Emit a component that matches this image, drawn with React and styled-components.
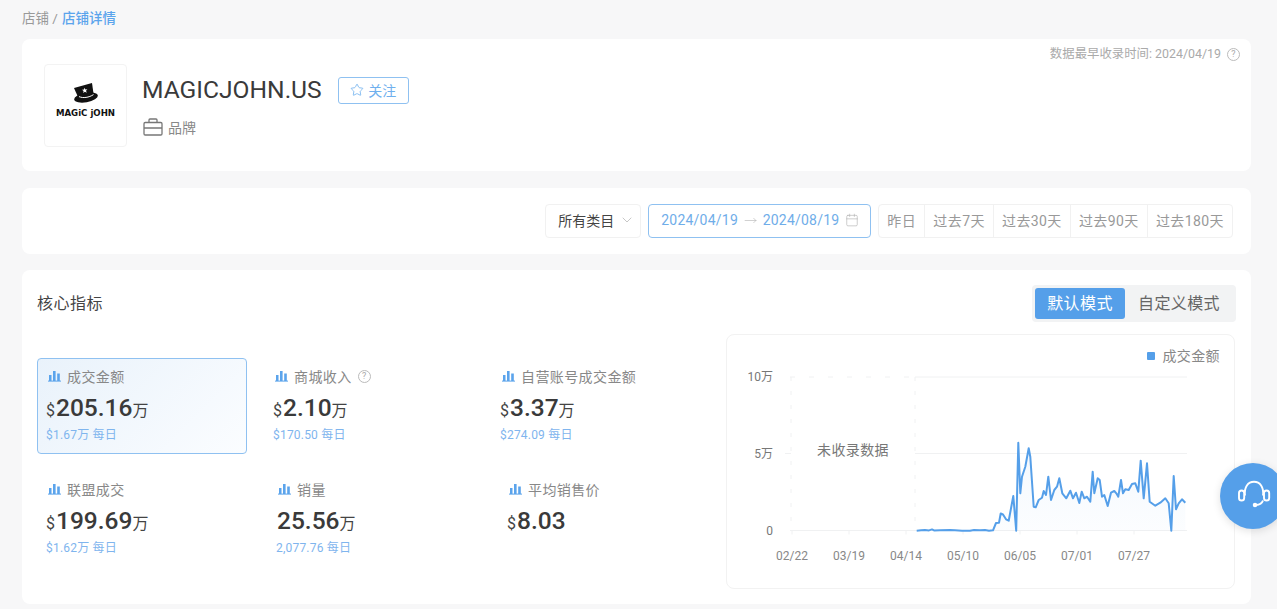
import React from "react";
import styled, { createGlobalStyle } from "styled-components";
import { ChevronDown, Star, Calendar, MoveRight } from "lucide-react";

const Global = createGlobalStyle`
  html, body { margin: 0; padding: 0; height: 609px; overflow: hidden; background: #f7f7f8; }
  body { font-family: Roboto, "Noto Sans CJK SC", sans-serif; color: #333; }
  * { box-sizing: border-box; }
`;

const Page = styled.div`
  padding: 0 26px 0 22px;
  display: flex;
  flex-direction: column;
`;
const Crumbs = styled.div`
  height: 39px;
  padding-bottom: 5px;
  display: flex;
  align-items: center;
  gap: 4px;
  font-size: 13.5px;
  color: #999;
`;
const CrumbNow = styled.span`
  color: #5ba4ec;
  font-weight: 500;
`;
const Card = styled.section`
  background: #fff;
  border-radius: 8px;
`;
const ShopCard = styled(Card)`
  height: 132px;
  padding: 8px 11px 0 22px;
  display: flex;
  align-items: flex-start;
  margin-bottom: 17px;
`;
const LogoBox = styled.div`
  width: 83px;
  height: 83px;
  margin-top: 17px;
  border: 1px solid #f3f3f3;
  border-radius: 4px;
  display: flex;
  flex-direction: column;
  align-items: center;
  justify-content: center;
  padding-bottom: 10px;
`;
const LogoWord = styled.span`
  font-family: "DejaVu Sans", sans-serif;
  font-weight: 700;
  font-size: 8.6px;
  line-height: 9px;
  color: #111;
  white-space: nowrap;
  margin-top: 5px;
`;
const ShopInfo = styled.div`
  margin: 28px 0 0 15px;
  display: flex;
  flex-direction: column;
  gap: 12px;
`;
const ShopTop = styled.div`
  display: flex;
  align-items: center;
  gap: 16px;
`;
const ShopName = styled.h1`
  margin: 0;
  font-weight: 400;
  font-size: 24.6px;
  line-height: 30px;
  color: #3a3a3a;
`;
const Follow = styled.button`
  width: 71px;
  height: 27px;
  padding: 0 0 1px;
  background: #fff;
  border: 1px solid #8fc1f1;
  border-radius: 3px;
  color: #6fb0ee;
  font: 14px Roboto, "Noto Sans CJK SC", sans-serif;
  display: flex;
  align-items: center;
  justify-content: center;
  gap: 4px;
`;
const TypeRow = styled.div`
  display: flex;
  align-items: center;
  gap: 5px;
  font-size: 14px;
  color: #888;
  margin-left: 1px;
`;
const Note = styled.div`
  margin-left: auto;
  display: flex;
  align-items: center;
  gap: 6px;
  font-size: 12.4px;
  line-height: 14px;
  color: #aaa;
`;
const HelpMark = styled.span`
  width: 13px;
  height: 13px;
  border: 1px solid #bbb;
  border-radius: 50%;
  color: #aaa;
  font-size: 9px;
  line-height: 11px;
  letter-spacing: 0;
  text-align: center;
  flex: none;
`;
const FilterCard = styled(Card)`
  height: 66px;
  margin-bottom: 16px;
  padding: 16px 18px 0 0;
  display: flex;
  justify-content: flex-end;
  gap: 7px;
`;
const Select = styled.div`
  width: 96px;
  height: 34px;
  padding: 0 5px 2px 12px;
  border: 1px solid #f1f1f1;
  border-radius: 4px;
  display: flex;
  align-items: center;
  justify-content: space-between;
  font-size: 14px;
  color: #444;
`;
const DateRange = styled.div`
  width: 223px;
  height: 34px;
  padding: 0 11px 2px 12px;
  border: 1px solid #8fc1f1;
  border-radius: 4px;
  display: flex;
  align-items: center;
  justify-content: space-between;
  font-size: 14px;
  letter-spacing: 0.22px;
  color: #6fade9;
`;
const Presets = styled.div`
  height: 34px;
  border: 1px solid #f1f1f1;
  border-radius: 4px;
  display: flex;
`;
const Preset = styled.div`
  padding: 0 8.1px 2px;
  display: flex;
  align-items: center;
  font-size: 14px;
  letter-spacing: 0.4px;
  color: #999;
  & + & { border-left: 1px solid #f1f1f1; }
`;
const CoreCard = styled(Card)`
  height: 334px;
  padding: 15px 16px 15px 15px;
  display: flex;
  flex-direction: column;
  gap: 12px;
`;
const CoreHead = styled.div`
  height: 37px;
  display: flex;
  align-items: center;
  justify-content: space-between;
`;
const CoreTitle = styled.h2`
  margin: 0;
  padding-bottom: 3px;
  font-size: 16px;
  font-weight: 400;
  letter-spacing: 0.5px;
  color: #444;
`;
const Modes = styled.div`
  margin-right: -1px;
  padding: 3px;
  border-radius: 4px;
  background: #f2f3f4;
  display: flex;
`;
const Mode = styled.div`
  height: 31px;
  padding: 0 ${p => (p.$active ? 12.2 : 13)}px 3px;
  border-radius: 3px;
  display: flex;
  align-items: center;
  font-size: 16px;
  letter-spacing: 0.4px;
  background: ${p => (p.$active ? "#559fe9" : "transparent")};
  color: ${p => (p.$active ? "#fff" : "#666")};
`;
const CoreBody = styled.div`
  display: flex;
  gap: 25px;
`;
const Metrics = styled.div`
  margin-top: 24px;
  display: grid;
  grid-template-columns: repeat(3, 210px);
  grid-auto-rows: 96px;
  gap: 17px;
  align-content: start;
`;
const Metric = styled.div`
  padding: 9px 0 0 ${p => p.$inset ?? 9}px;
  border: 1px solid ${p => (p.$active ? "#8fc1f1" : "transparent")};
  border-radius: 4px;
  background: ${p => (p.$active ? "linear-gradient(135deg, #e9f2fb, #fbfdff)" : "transparent")};
`;
const MetricLabel = styled.div`
  height: 16px;
  margin-left: 1px;
  display: flex;
  align-items: center;
  gap: 6px;
  font-size: 14px;
  letter-spacing: 0.4px;
  color: #888;
`;
const MetricValue = styled.div`
  margin: 9px 0 0 -1px;
  height: 30px;
  display: flex;
  align-items: baseline;
  font-size: 16px;
  color: #444;
`;
const Number = styled.strong`
  font-size: 24.5px;
  line-height: 30px;
  font-weight: 500;
  color: #3a3a3a;
  margin-left: 1px;
`;
const MetricDaily = styled.div`
  margin: 4px 0 0 -1px;
  font-size: 12px;
  line-height: 16px;
  letter-spacing: 0.2px;
  color: #7fb5ee;
`;
const ChartPanel = styled.div`
  position: relative;
  width: 509px;
  height: 255px;
  border: 1px solid #f2f2f2;
  border-radius: 8px;
`;
const Legend = styled.div`
  position: absolute;
  top: 12px;
  right: 14px;
  display: flex;
  align-items: center;
  gap: 7px;
  font-size: 14px;
  line-height: 18px;
  letter-spacing: 0.4px;
  color: #888;
`;
const LegendDot = styled.i`
  width: 8px;
  height: 8px;
  border-radius: 1px;
  background: #559fe9;
`;
const ChartSvg = styled.svg`
  display: block;
  font-family: Roboto, "Noto Sans CJK SC", sans-serif;
`;
const Support = styled.div`
  position: fixed;
  right: -9px;
  top: 463px;
  width: 66px;
  height: 66px;
  padding-left: 2px;
  border-radius: 50%;
  background: #559fe9;
  box-shadow: 0 2px 8px rgba(0, 0, 0, 0.12);
  display: flex;
  align-items: center;
  justify-content: center;
`;

const Bars = () => (
  <svg width="13" height="12" viewBox="0 0 13 12" fill="#5ba4ec">
    <rect x="1" y="5" width="2.5" height="6" />
    <rect x="5" y="1" width="2.6" height="10" />
    <rect x="9.2" y="3.5" width="2.6" height="7.5" />
    <rect x="0" y="10.6" width="13" height="1" />
  </svg>
);

const Hat = () => (
  <svg width="24" height="21" viewBox="0 0 24 21">
    <path d="M0 5 L18 0 L19.5 10.5 L4 14 Z" fill="#111" />
    <ellipse cx="12" cy="14.5" rx="12" ry="4.8" transform="rotate(-10 12 14.5)" fill="#111" />
    <path d="M5 13.6 C9 15.4 15 14.6 19.5 11.6" stroke="#fff" strokeWidth="1" fill="none" />
    <path d="M10.5 4.8 l.9 1.8 2-.3-1.4 1.5 .8 1.9-1.9-.9-1.7 1.2 .4-2-1.6-1.3 2-.2z" fill="#fff" />
  </svg>
);

const Briefcase = () => (
  <svg width="20" height="18" viewBox="0 0 20 18" fill="none" stroke="#777" strokeWidth="1.3">
    <rect x="1" y="4.5" width="18" height="12.5" rx="1.2" />
    <path d="M6 4.5V2a1 1 0 0 1 1-1h6a1 1 0 0 1 1 1v2.5M1 10h18" />
  </svg>
);

const Headset = () => (
  <svg width="40" height="40" viewBox="0 0 40 40" fill="none" stroke="#fff" strokeWidth="1.9">
    <rect x="5" y="14.5" width="5.2" height="10" rx="2.6" />
    <rect x="30" y="14.5" width="5.2" height="10" rx="2.6" />
    <path d="M11 19.5C10 11 14 5.8 20 5.8S30 11 29 19.5" />
    <path d="M29 24.5C28 27.5 25.5 28.8 22 29" />
    <circle cx="21" cy="29" r="1.3" fill="#fff" />
  </svg>
);

const metrics = [
  { label: "成交金额", cur: "$", num: "205.16", unit: "万", daily: "$1.67万 每日", active: true },
  { label: "商城收入", cur: "$", num: "2.10", unit: "万", daily: "$170.50 每日", help: true },
  { label: "自营账号成交金额", cur: "$", num: "3.37", unit: "万", daily: "$274.09 每日" },
  { label: "联盟成交", cur: "$", num: "199.69", unit: "万", daily: "$1.62万 每日" },
  { label: "销量", num: "25.56", unit: "万", daily: "2,077.76 每日", inset: 12 },
  { label: "平均销售价", cur: "$", num: "8.03", inset: 16 },
];

// Points in page coordinates; the panel's box starts at (727, 335).
const line = [
  [916.7,530.7],[921,530.3],[925,530],[929,530.4],[932,529.4],[934,530.4],[940,530.2],[950,530],[955,530.3],[962,530.8],[970,530.7],
  [974,530],[980,530.3],[985,530],[989,530.8],[993,530.3],[996,523],[999,522.7],[1000.7,513.5],[1003,514.5],[1006,519.3],[1008.7,520.7],
  [1013.3,496],[1016.2,530.7],[1018.3,442.7],[1020.3,493.3],[1022,476.7],[1025.3,466.7],[1028.7,448.3],[1030.3,456.7],[1033.7,506.7],
  [1035.7,507.3],[1038.7,500],[1042,497.7],[1043.7,491],[1046,495],[1048.3,476.7],[1051,500],[1054.3,490],[1057,486.7],[1059.3,478.3],
  [1062.3,493.3],[1066.3,498.3],[1070.3,490.7],[1073,498.3],[1076,492.7],[1079.3,503],[1081.7,491.7],[1084.3,498.3],[1087,496.7],
  [1090.3,501.7],[1092.7,471.7],[1094.3,493.3],[1097.7,478.3],[1099.7,480],[1102,496.7],[1104.3,495],[1107.7,506],[1111,492.7],
  [1114.3,491],[1116.3,493.3],[1118.3,496.7],[1121,480],[1123,493.3],[1125.3,489.3],[1128.7,490],[1132,484],[1135.3,483.3],[1138.3,491.7],
  [1140.7,460.7],[1143.7,498.3],[1147,463.3],[1149.7,501.7],[1155.3,505.7],[1160.3,502.7],[1165.3,498.3],[1168.7,503.3],[1171.3,530.7],
  [1173.7,476],[1176,509.3],[1178.7,503.3],[1182,499.3],[1185.3,502.7],
].map(([x, y]) => [x - 727, y - 335]);
const linePts = line.map(p => p.join(",")).join(" ");
const areaPts = `${line[0][0]},195.5 ${linePts} ${line[line.length - 1][0]},195.5`;

const dates = ["02/22", "03/19", "04/14", "05/10", "06/05", "07/01", "07/27"];
const gridColor = "#f0f1f2";

const Chart = () => (
  <ChartSvg width="507" height="253" viewBox="0 0 507 253">
    <defs>
      <linearGradient id="area" x1="0" y1="0" x2="0" y2="1">
        <stop offset="0" stopColor="#559fe9" stopOpacity="0.07" />
        <stop offset="1" stopColor="#559fe9" stopOpacity="0.02" />
      </linearGradient>
    </defs>
    <path d="M63 42H188" stroke={gridColor} strokeDasharray="5 14" />
    <path d="M188 42H460M188 118.5H460M63 195.5H460M58 118.5H64" stroke={gridColor} />
    <path d="M64 42V195M188 42V195" stroke={gridColor} strokeDasharray="4 10" />
    {dates.map((d, i) => (
      <g key={d}>
        <path d={`M${65 + i * 57} 195.5v4`} stroke={gridColor} />
        <text x={65 + i * 57} y={225} textAnchor="middle" fontSize="12" fill="#888">{d}</text>
      </g>
    ))}
    <text x="46" y="46" textAnchor="end" fontSize="12" fill="#777">10万</text>
    <text x="46" y="123" textAnchor="end" fontSize="12" fill="#777">5万</text>
    <text x="46" y="200" textAnchor="end" fontSize="12" fill="#777">0</text>
    <text x="90" y="120" fontSize="14" letterSpacing="0.4" fill="#777">未收录数据</text>
    <polygon points={areaPts} fill="url(#area)" />
    <polyline points={linePts} fill="none" stroke="#559fe9" strokeWidth="2" strokeLinejoin="round" />
  </ChartSvg>
);

export default function App() {
  return (
    <Page>
      <Global />
      <Crumbs>店铺 / <CrumbNow>店铺详情</CrumbNow></Crumbs>
      <ShopCard>
        <LogoBox>
          <Hat />
          <LogoWord>MAGiC jOHN</LogoWord>
        </LogoBox>
        <ShopInfo>
          <ShopTop>
            <ShopName>MAGICJOHN.US</ShopName>
            <Follow><Star size={14} strokeWidth={1.4} />关注</Follow>
          </ShopTop>
          <TypeRow><Briefcase />品牌</TypeRow>
        </ShopInfo>
        <Note>数据最早收录时间: 2024/04/19 <HelpMark>?</HelpMark></Note>
      </ShopCard>
      <FilterCard>
        <Select>所有类目<ChevronDown size={16} strokeWidth={1} color="#aaa" /></Select>
        <DateRange>
          2024/04/19
          <MoveRight size={13} strokeWidth={1} color="#aaa" />
          2024/08/19
          <Calendar size={14} strokeWidth={1} color="#aaa" />
        </DateRange>
        <Presets>
          {["昨日", "过去7天", "过去30天", "过去90天", "过去180天"].map(t => <Preset key={t}>{t}</Preset>)}
        </Presets>
      </FilterCard>
      <CoreCard>
        <CoreHead>
          <CoreTitle>核心指标</CoreTitle>
          <Modes>
            <Mode $active>默认模式</Mode>
            <Mode>自定义模式</Mode>
          </Modes>
        </CoreHead>
        <CoreBody>
          <Metrics>
            {metrics.map(m => (
              <Metric key={m.label} $active={m.active} $inset={m.inset}>
                <MetricLabel>
                  <Bars />{m.label}{m.help && <HelpMark>?</HelpMark>}
                </MetricLabel>
                <MetricValue>{m.cur}<Number>{m.num}</Number>{m.unit}</MetricValue>
                {m.daily && <MetricDaily>{m.daily}</MetricDaily>}
              </Metric>
            ))}
          </Metrics>
          <ChartPanel>
            <Legend><LegendDot />成交金额</Legend>
            <Chart />
          </ChartPanel>
        </CoreBody>
      </CoreCard>
      <Support><Headset /></Support>
    </Page>
  );
}
